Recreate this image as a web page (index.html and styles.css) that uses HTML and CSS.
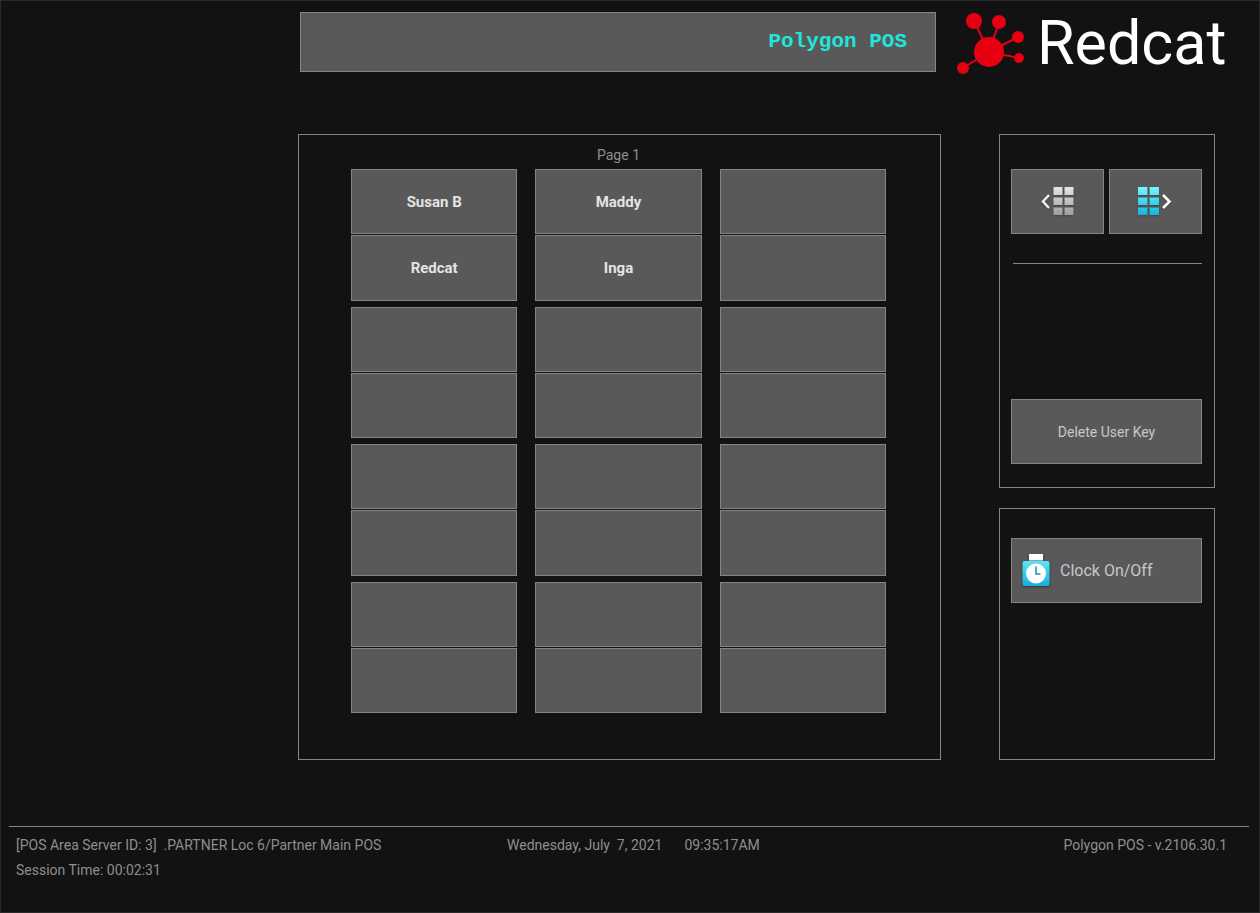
FILE: index.html
```html
<!DOCTYPE html>
<html lang="en">
<head>
<meta charset="utf-8">
<title>Polygon POS</title>
<link rel="stylesheet" href="styles.css">
</head>
<body>
<div class="app">
  <header class="header">
    <div class="display">Polygon POS</div>
    <div class="logo">
      <svg class="logo-mark" width="68" height="62" viewBox="0 0 68 62" aria-hidden="true">
        <g stroke="#e60012" stroke-width="2">
          <path d="M32 40 17 9M32 40 42 10M32 40 61 25M32 40 62 46M32 40 6 56"/>
        </g>
        <g fill="#e60012">
          <circle cx="32" cy="40" r="15"/>
          <circle cx="17" cy="9" r="8"/>
          <circle cx="42" cy="10" r="7"/>
          <circle cx="61" cy="25" r="6"/>
          <circle cx="62" cy="46" r="5"/>
          <circle cx="6" cy="56" r="6"/>
        </g>
      </svg>
      <span class="logo-name">Redcat</span>
    </div>
  </header>

  <main class="main">
    <section class="panel users">
      <h1 class="page-title">Page 1</h1>
      <div class="key-groups">
        <div class="key-group">
          <button class="key">Susan B</button><button class="key">Maddy</button><button class="key" aria-label="Empty key"></button>
          <button class="key">Redcat</button><button class="key">Inga</button><button class="key" aria-label="Empty key"></button>
        </div>
        <div class="key-group">
          <button class="key" aria-label="Empty key"></button><button class="key" aria-label="Empty key"></button><button class="key" aria-label="Empty key"></button>
          <button class="key" aria-label="Empty key"></button><button class="key" aria-label="Empty key"></button><button class="key" aria-label="Empty key"></button>
        </div>
        <div class="key-group">
          <button class="key" aria-label="Empty key"></button><button class="key" aria-label="Empty key"></button><button class="key" aria-label="Empty key"></button>
          <button class="key" aria-label="Empty key"></button><button class="key" aria-label="Empty key"></button><button class="key" aria-label="Empty key"></button>
        </div>
        <div class="key-group">
          <button class="key" aria-label="Empty key"></button><button class="key" aria-label="Empty key"></button><button class="key" aria-label="Empty key"></button>
          <button class="key" aria-label="Empty key"></button><button class="key" aria-label="Empty key"></button><button class="key" aria-label="Empty key"></button>
        </div>
      </div>
    </section>

    <aside class="side">
      <section class="panel tools">
        <div class="pager">
          <button class="key" aria-label="Previous page">
            <svg class="pager-icon" width="36" height="32" viewBox="0 0 36 32" aria-hidden="true">
              <defs>
                <linearGradient id="grey" gradientUnits="userSpaceOnUse" x1="0" y1="1" x2="0" y2="29"><stop offset="0" stop-color="#e6e6e6"/><stop offset="1" stop-color="#9c9c9c"/></linearGradient>
              </defs>
              <path d="M9 9 3 15.500 9 22" fill="none" stroke="#f2f2f2" stroke-width="2.400"/>
              <path fill="url(#grey)" d="M13.500 1h9v8h-9zM24.500 1h9v8h-9zM13.500 11.500h9v7.500h-9zM24.500 11.500h9v7.500h-9zM13.500 21.500h9v7.500h-9zM24.500 21.500h9v7.500h-9z"/>
            </svg>
          </button>
          <button class="key" aria-label="Next page">
            <svg class="pager-icon" width="36" height="32" viewBox="0 0 36 32" aria-hidden="true">
              <defs>
                <linearGradient id="cyan" gradientUnits="userSpaceOnUse" x1="0" y1="1" x2="0" y2="29"><stop offset="0" stop-color="#7df3fb"/><stop offset=".5" stop-color="#3dd9ee"/><stop offset="1" stop-color="#17b2dc"/></linearGradient>
              </defs>
              <path fill="url(#cyan)" d="M0 1h9.500v8h-9.500zM11.500 1h9.500v8h-9.500zM0 11.500h9.500v7.500h-9.500zM11.500 11.500h9.500v7.500h-9.500zM0 21.500h9.500v7.500h-9.500zM11.500 21.500h9.500v7.500h-9.500z"/>
              <path d="M25 9 31.500 15.500 25 22" fill="none" stroke="#fff" stroke-width="2.600"/>
            </svg>
          </button>
        </div>
        <hr class="rule">
        <button class="key delete">Delete User Key</button>
      </section>
      <section class="panel clock">
        <button class="key clock-key">
          <svg class="clock-icon" width="28" height="34" viewBox="0 0 28 34" aria-hidden="true">
            <defs>
              <linearGradient id="watch" x1="0" y1="0" x2="0" y2="1"><stop offset="0" stop-color="#5ae5f5"/><stop offset="1" stop-color="#17aedb"/></linearGradient>
            </defs>
            <path fill="#fff" d="M7 0h14v6.500H7z"/>
            <rect x="0.500" y="7" width="27" height="25" rx="2" fill="url(#watch)"/>
            <circle cx="14" cy="19.500" r="10" fill="#fff"/>
            <path d="M14 12.500v7.500h4.500" fill="none" stroke="#1f8ea8" stroke-width="1.500"/>
          </svg>
          <span>Clock On/Off</span>
        </button>
      </section>
    </aside>
  </main>

  <footer class="footer">
    <div class="server">
      <div>[POS Area Server ID: 3]&nbsp; .PARTNER Loc 6/Partner Main POS</div>
      <div>Session Time: 00:02:31</div>
    </div>
    <div class="status">
      <div class="now"><span>Wednesday, July&nbsp; 7, 2021</span><span>09:35:17AM</span></div>
      <div>Polygon POS - v.2106.30.1</div>
    </div>
  </footer>
</div>
</body>
</html>
```
FILE: styles.css
```css
* { box-sizing: border-box; }

body {
  margin: 0;
  background: #121212;
  color: #8e8e8e;
  font-family: Roboto, "Liberation Sans", sans-serif;
  font-size: 14px;
}

.app {
  display: flex;
  flex-direction: column;
  min-height: 100vh;
  border: 1px solid #2a2a2a;
}

.header,
.main {
  display: grid;
  grid-template-columns: 297fr 643fr 58fr 216fr 44fr;
}

.header { padding-top: 11px; }

.display {
  grid-column: 2;
  height: 60px;
  margin: 0 5px 0 2px;
  padding: 0 28px;
  border: 1px solid #858585;
  background: #595959;
  color: #1fe6dc;
  font: bold 21px/58px "Liberation Mono", monospace;
  text-align: right;
}

.logo {
  grid-column: 3 / 6;
  display: flex;
  gap: 12px;
  height: 60px;
  padding-left: 16px;
}

.logo-mark { flex: none; }

.logo-name {
  color: #fff;
  font-size: 61px;
  font-weight: 400;
  line-height: 62px;
}

.main {
  margin-top: 62px;
  min-height: 626px;
}

.panel { border: 1px solid #858585; }

.users {
  grid-column: 2;
  display: flex;
  flex-direction: column;
  padding: 10px 54px 46px 52px;
}

.page-title {
  margin: 0 0 4px;
  font-size: 14px;
  font-weight: 400;
  line-height: 20px;
  text-align: center;
}

.key-groups {
  flex: 1;
  display: grid;
  grid-auto-rows: 1fr;
  gap: 6px;
}

.key-group {
  display: grid;
  grid-template-columns: repeat(3, 1fr);
  grid-template-rows: repeat(2, 1fr);
  gap: 1px 18px;
}

.key {
  min-height: 65px;
  padding: 0;
  border: 1px solid #858585;
  border-radius: 0;
  background: #595959;
  color: #e4e4e4;
  font: bold 15px Roboto, "Liberation Sans", sans-serif;
}

.side {
  grid-column: 4;
  display: flex;
  flex-direction: column;
  gap: 20px;
}

.tools {
  display: flex;
  flex-direction: column;
  height: 354px;
  padding: 34px 12px 23px 11px;
}

.pager {
  display: grid;
  grid-template-columns: 1fr 1fr;
  gap: 5px;
}

.pager-icon {
  display: block;
  margin: 0 auto;
  filter: drop-shadow(0 1px 1px #444);
}

.rule {
  align-self: stretch;
  margin: 29px 0 0 2px;
  border: 0;
  border-top: 1px solid #858585;
}

.delete {
  margin-top: auto;
  color: #c8c8c8;
  font-size: 14px;
  font-weight: 400;
}

.clock {
  flex: 1;
  padding: 29px 12px 29px 11px;
}

.clock-key {
  display: flex;
  align-items: center;
  gap: 10px;
  width: 100%;
  padding: 0 10px;
  color: #c8c8c8;
  font-size: 16px;
  font-weight: 400;
}

.clock-icon { filter: drop-shadow(0 1px 1px #333); }

.footer {
  display: grid;
  grid-template-columns: 491fr 720fr;
  margin: 66px 10px 0 8px;
  padding: 6px 22px 0 7px;
  border-top: 1px solid #858585;
  line-height: 25px;
}

.status {
  display: flex;
  justify-content: space-between;
}

.now {
  display: flex;
  gap: 22px;
}
```
